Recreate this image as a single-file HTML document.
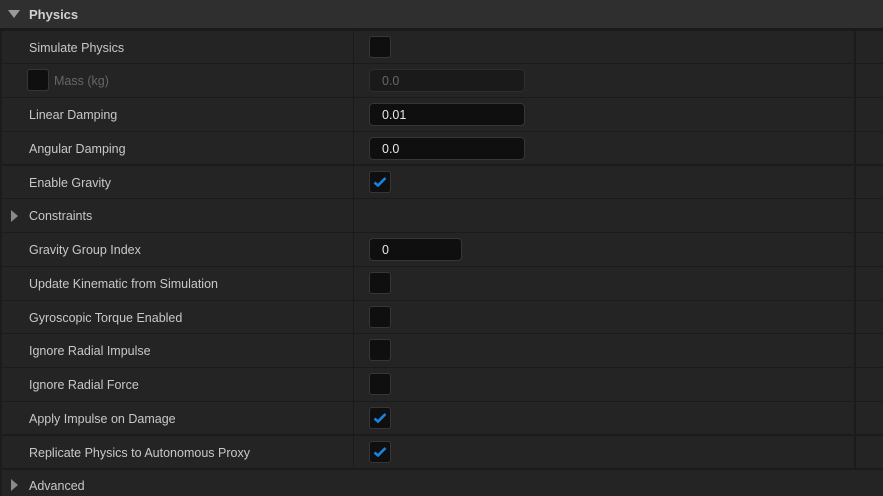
<!DOCTYPE html><html><head><style>
html,body{margin:0;width:883px;height:496px;overflow:hidden}
body{background:#242424;font-family:"Liberation Sans",sans-serif;font-size:12.5px;color:#c8c8c8;position:relative}
.hdr{position:absolute;left:0;top:0;width:883px;height:28px;background:#2f2f2f}
.hdr span{position:absolute;left:29px;top:7px;font-weight:bold;color:#d0d0d0;font-size:13px}
.tri{position:absolute;left:8px;top:10px;width:0;height:0;border-left:6px solid transparent;border-right:6px solid transparent;border-top:8px solid #9a9a9a}
.sep{position:absolute;left:0;width:883px;height:1px;background:#1b1b1b}
.row{position:absolute;left:0;width:883px;height:33px}
.row .l{position:absolute;left:29px;top:10px}
.d1{position:absolute;left:353px;top:31px;width:1px;height:438px;background:#1b1b1b}
.d2{position:absolute;left:854px;top:31px;width:2px;height:438px;background:#1b1b1b}
.cb{position:absolute;left:369px;top:5px;width:20px;height:20px;background:#0f0f0f;border:1px solid #363636;border-radius:3px}
.cb svg{position:absolute;left:3px;top:4px}
.in{position:absolute;left:369px;top:5px;width:154px;height:21px;background:#0f0f0f;border:1px solid #363636;border-radius:4px}
.in span{position:absolute;left:12px;top:4px;color:#e8e8e8}
.rt{position:absolute;left:11px;top:11px;width:0;height:0;border-top:6px solid transparent;border-bottom:6px solid transparent;border-left:7px solid #8a8a8a}
.lb{position:absolute;left:0;top:31px;width:2px;height:465px;background:#1c1c1c}
</style></head><body>
<div class="hdr"><div class="tri"></div><span>Physics</span></div>
<div class="sep" style="top:28px;height:3px;background:#1a1a1a"></div>

<div class="row" style="top:31px"><span class="l">Simulate Physics</span><div class="cb"></div></div>
<div class="row" style="top:64px"><div class="cb" style="left:27px"></div><span class="l" style="left:54px;color:#666">Mass (kg)</span><div class="in" style="background:#1a1a1a;border-color:#2e2e2e"><span style="color:#666">0.0</span></div></div>
<div class="row" style="top:98px"><span class="l">Linear Damping</span><div class="in"><span>0.01</span></div></div>
<div class="row" style="top:132px"><span class="l">Angular Damping</span><div class="in"><span>0.0</span></div></div>
<div class="row" style="top:166px"><span class="l">Enable Gravity</span><div class="cb"><svg width="14" height="12" viewBox="0 0 14 12"><path d="M1.5 6.5 L5 9.5 L12.5 2" stroke="#1a82e0" stroke-width="2.6" fill="none"/></svg></div></div>
<div class="row" style="top:199px"><div class="rt"></div><span class="l">Constraints</span></div>
<div class="row" style="top:233px"><span class="l">Gravity Group Index</span><div class="in" style="width:91px"><span>0</span></div></div>
<div class="row" style="top:267px"><span class="l">Update Kinematic from Simulation</span><div class="cb"></div></div>
<div class="row" style="top:301px"><span class="l">Gyroscopic Torque Enabled</span><div class="cb"></div></div>
<div class="row" style="top:334px"><span class="l">Ignore Radial Impulse</span><div class="cb"></div></div>
<div class="row" style="top:368px"><span class="l">Ignore Radial Force</span><div class="cb"></div></div>
<div class="row" style="top:402px"><span class="l">Apply Impulse on Damage</span><div class="cb"><svg width="14" height="12" viewBox="0 0 14 12"><path d="M1.5 6.5 L5 9.5 L12.5 2" stroke="#1a82e0" stroke-width="2.6" fill="none"/></svg></div></div>
<div class="row" style="top:436px"><span class="l">Replicate Physics to Autonomous Proxy</span><div class="cb"><svg width="14" height="12" viewBox="0 0 14 12"><path d="M1.5 6.5 L5 9.5 L12.5 2" stroke="#1a82e0" stroke-width="2.6" fill="none"/></svg></div></div>
<div class="row" style="top:470px"><div class="rt" style="top:9px"></div><span class="l" style="top:9px">Advanced</span></div>

<div class="sep" style="top:63px"></div>
<div class="sep" style="top:97px"></div>
<div class="sep" style="top:131px"></div>
<div class="sep" style="top:164px;height:2px"></div>
<div class="sep" style="top:198px"></div>
<div class="sep" style="top:232px"></div>
<div class="sep" style="top:266px"></div>
<div class="sep" style="top:300px"></div>
<div class="sep" style="top:333px"></div>
<div class="sep" style="top:367px"></div>
<div class="sep" style="top:401px"></div>
<div class="sep" style="top:434px;height:2px"></div>
<div class="sep" style="top:468px;height:2px"></div>
<div class="d1"></div><div class="d2"></div>
<div class="lb"></div>
</body></html>
